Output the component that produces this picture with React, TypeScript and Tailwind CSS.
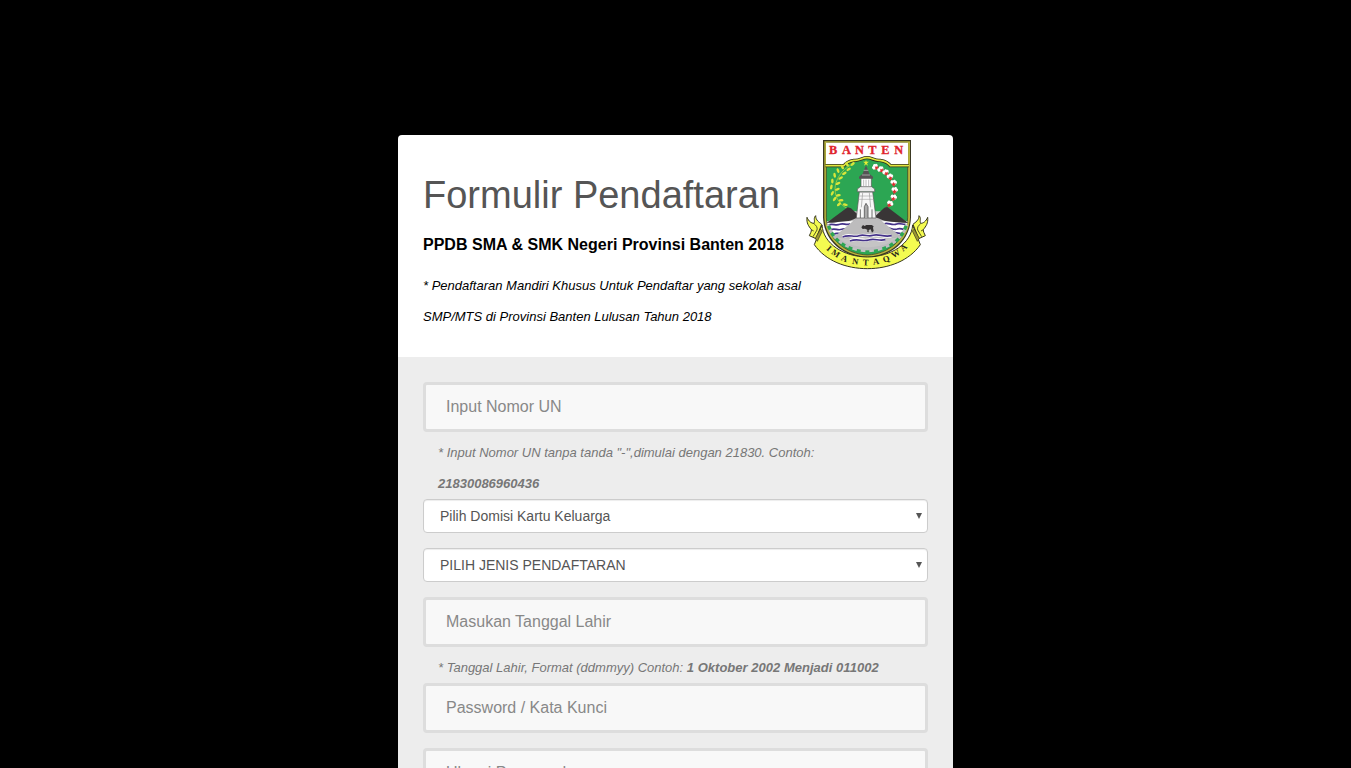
import React from 'react';

const TITLE: [string, number][] = [
  ['B', 99], ['A', 139], ['N', 178], ['T', 217], ['E', 256], ['N', 296],
];

const MOTTO: [string, number, number, number][] = [
  ['I', 87, 356, 40],
  ['M', 107, 371, 34],
  ['A', 133, 386, 22],
  ['N', 166, 395, 10],
  ['T', 197, 398, 2],
  ['A', 228, 395, -8],
  ['Q', 259, 387, -20],
  ['W', 287, 372, -32],
  ['A', 311, 353, -44],
];

const LEAVES: [number, number, number][] = [
  [141, 103, 40], [158, 102, -50], [127, 111, 30], [146, 118, -55], [114, 122, 20],
  [133, 130, -60], [104, 136, 10], [122, 144, -62], [97, 153, 0], [114, 160, -65],
  [94, 171, -12], [112, 178, -72], [97, 190, -25], [115, 196, -80], [104, 207, -38],
  [123, 211, -88], [117, 223, -50], [136, 224, -100],
];

const COTTON: [number, number, number][] = [
  [226, 111, -55], [242, 118, -40], [257, 127, -25], [270, 140, -12],
  [281, 158, 0], [284, 180, 5], [281, 202, 12], [270, 221, 25],
];

const COGS: [number, number, number][] = [
  [88, 293, 65], [98, 313, 54], [112, 330, 44], [130, 344, 34], [151, 355, 22],
  [176, 363, 10], [202, 366, 0], [228, 363, -10], [253, 355, -22], [274, 344, -34],
  [292, 330, -44], [306, 313, -54], [316, 293, -65],
];

function RibbonEnd() {
  return (
    <g stroke="#35351d" strokeWidth="3" strokeLinejoin="round">
      <path d="M21 262C26 274 34 280 42 280C46 272 39 265 47 257C47 271 57 276 65 283L48 326L28 317C31 310 35 304 34 299C26 288 19 280 21 262Z" fill="#f4fb50" />
      <path d="M42 281C49 287 53 292 51 300L39 320M34 299L41 303" fill="none" strokeWidth="2.5" />
      <path d="M46 325L61 297L67 303L52 334Z" fill="#9c9733" strokeWidth="2" />
    </g>
  );
}

function Emblem() {
  return (
    <svg
      className="absolute left-[408px] top-1 h-[131px] w-[123px]"
      viewBox="18 27 369 393"
      role="img"
      aria-label="Banten"
    >
      <path d="M69 30H333V262C331 332 274 382 202 384C130 382 71 332 69 262Z" fill="#3a3822" />
      <path d="M73 34H330V262C328 329 272 378 202 380C132 378 75 329 73 262Z" fill="#b9b63c" />
      <path d="M79 39H323V262C321 325 268 372 202 375C136 372 81 325 79 262Z" fill="#2ca653" stroke="#39381f" strokeWidth="2" />
      <path d="M78 38H324V106H271C264 94 253 91 240 89C225 91 216 81 201 81C186 81 177 91 162 89C149 91 139 95 132 106H78Z" fill="#fff" />
      <path d="M76 107H132C139 96 149 93 162 91C177 93 187 83 201 83C215 83 226 93 240 91C253 93 264 96 271 107H327" fill="none" stroke="#30301c" strokeWidth="10" />
      <path d="M76 107H132C139 96 149 93 162 91C177 93 187 83 201 83C215 83 226 93 240 91C253 93 264 96 271 107H327" fill="none" stroke="#e2e83e" strokeWidth="5" />
      {TITLE.map(([ch, x]) => (
        <text key={x} x={x} y="72" textAnchor="middle" fill="#e0242c" stroke="#e0242c" strokeWidth="1" fontFamily="Liberation Serif, serif" fontWeight="bold" fontSize="37">{ch}</text>
      ))}

      <path d="M156 103C124 119 105 150 105 178C106 204 119 223 141 235" fill="none" stroke="#c9dc3a" strokeWidth="2" />
      {LEAVES.map(([x, y, r], i) => (
        <ellipse key={i} cx={x} cy={y} rx="3.8" ry="7.5" fill="#d9e63a" transform={`rotate(${-r} ${x} ${y})`} />
      ))}
      <path d="M220 108C258 112 283 143 283 180C281 204 272 219 256 233" fill="none" stroke="#7b4540" strokeWidth="2" />
      {COTTON.map(([x, y, r], i) => (
        <g key={i} transform={`translate(${x} ${y}) rotate(${r}) scale(1.05)`}>
          <path d="M-9 1C-10-8-4-9-2-6C0-10 6-9 6-5C11-5 10 2 7 4L0 9Z" fill="#fff" />
          <path d="M-7 1L-3 3L0-2L3 3L7 1L3 8L0 11L-3 8Z" fill="#dc3130" />
        </g>
      ))}
      <path d="M198 90L200 95H207L201 100L204 107L198 103L192 107L195 100L189 95H196Z" fill="#e7ed32" />

      <path d="M80 276L143 244H263L323 276C316 328 267 364 202 367C137 364 88 328 80 276Z" fill="#c5c4c5" />
      <path d="M82 274H322C317 296 309 311 299 322L230 264H174L105 322C94 308 86 295 82 274Z" fill="#fff" />
      <path d="M86 285C96 279 107 288 119 283C130 278 140 287 150 281M93 299C104 293 113 303 125 298C132 294 138 298 143 296M103 312C110 307 117 313 125 309M254 281C263 276 277 288 290 282C301 278 309 285 317 283M260 296C269 290 280 302 292 297C301 293 307 299 311 297M278 309C286 304 293 313 302 309" fill="none" stroke="#443189" strokeWidth="5" />
      <path d="M174 262H230L300 318C283 325 263 325 244 321C217 313 183 313 161 321C142 327 122 324 106 318Z" fill="#bdbcbd" stroke="#a5a5a6" />
      <path d="M79 279L143 232L153 235L182 262C164 264 158 272 145 273C123 275 106 278 79 279ZM222 262L253 233L262 231L325 279C302 278 279 276 258 273C245 272 238 264 222 262Z" fill="#393536" />
      <path d="M128 321C148 310 157 323 177 318C190 311 204 320 218 316C235 310 248 323 274 318M150 332C177 322 189 335 207 329C222 323 236 334 255 329" fill="none" stroke="#fff" strokeWidth="9" />
      <path d="M128 321C148 312 161 323 177 317C194 311 204 322 219 316C236 310 250 323 275 317M150 333C173 324 189 336 206 330C224 324 236 334 256 329" fill="none" stroke="#443189" strokeWidth="5" />
      <path d="M84 284C96 330 143 355 202 357C261 355 309 330 320 284" fill="none" stroke="#bdbcbf" strokeWidth="9" />
      {COGS.map(([x, y, r], i) => (
        <rect key={i} x={x - 6} y={y - 5} width="12" height="10" fill="#2ca653" transform={`rotate(${r} ${x} ${y})`} />
      ))}

      <path d="M178 186H218L228 264H169Z" fill="#f7f7f7" stroke="#555" strokeWidth="2" />
      <path d="M183 143H214V174H183Z" fill="#fff" stroke="#555" strokeWidth="2" />
      <path d="M190 125L198 106L206 125L208 131L219 140V146H177V140L188 131Z" fill="#565455" />
      <path d="M191 121H205M186 135H210" stroke="#ccc" strokeWidth="2" />
      <path d="M172 177L181 170H215L224 177V185H172Z" fill="#e9e9e9" stroke="#555" strokeWidth="2" />
      <path d="M178 198H218M176 208H220" stroke="#aaa" strokeWidth="2" />
      <path d="M191 149V169M198 149V169M206 149V169M188 188L184 232M208 188L212 232" stroke="#999" strokeWidth="2" />
      <path d="M193 264V230L198 220L204 230V264M181 264V238M216 264V238" fill="#aaa" stroke="#555" strokeWidth="2.5" />
      <path d="M184 292L189 285L194 288L199 285H215L221 289L219 293L221 303L216 308L212 298L206 300V307L202 306V299L195 296L188 297Z" fill="#343132" />

      <path d="M66 285L43 344C76 392 138 416 202 416C266 416 328 392 361 344L338 285C334 341 274 380 202 381C130 380 70 341 66 285Z" fill="#f4fb50" stroke="#35351d" strokeWidth="3" strokeLinejoin="round" />
      <RibbonEnd />
      <g transform="translate(404 0) scale(-1 1)">
        <RibbonEnd />
      </g>
      {MOTTO.map(([ch, x, y, r], i) => (
        <text key={i} x={x} y={y + 8} textAnchor="middle" fill="#292718" fontFamily="Liberation Serif, serif" fontWeight="bold" fontSize="26" transform={`rotate(${r} ${x} ${y})`}>{ch}</text>
      ))}
    </svg>
  );
}

function TextInput({ label, type = 'text' }: { label: string; type?: string }) {
  return (
    <input
      type={type}
      placeholder={label}
      className="block h-[50px] w-full rounded border-[3px] border-[#ddd] bg-[#f8f8f8] px-5 text-base text-[#888] outline-none placeholder:text-[#888]"
    />
  );
}

function Dropdown({ label }: { label: string }) {
  return (
    <button className="flex h-[34px] w-full items-center justify-between rounded border border-[#ccc] bg-white pl-4 pr-[5px] text-sm text-[#555] shadow-[inset_0_1px_1px_rgba(0,0,0,0.075)]">
      <span>{label}</span>
      <svg className="mb-px h-[6px] w-[6px]" viewBox="0 0 6 6" aria-hidden="true">
        <path d="M0 0H6L3 6Z" fill="#555" />
      </svg>
    </button>
  );
}

export default function App() {
  return (
    <div className="h-screen overflow-hidden bg-black pt-[135px] font-['Liberation_Sans',Arial,sans-serif]">
      <main className="mx-auto w-[555px]">
        <header className="relative h-[222px] rounded-t bg-white px-[25px] pt-[37px]">
          <Emblem />
          <h1 className="text-[38px] leading-[46px] text-[#555]">Formulir Pendaftaran</h1>
          <p className="mt-[11px] text-base font-bold leading-8 tracking-[0.015px] text-black">PPDB SMA &amp; SMK Negeri Provinsi Banten 2018</p>
          <p className="mt-[9px] w-[390px] text-[13px] italic leading-[31px] text-black">
            * Pendaftaran Mandiri Khusus Untuk Pendaftar yang sekolah asal SMP/MTS di Provinsi Banten Lulusan Tahun 2018
          </p>
        </header>
        <form className="h-[600px] bg-[#ededed] px-[25px] pt-[25px]">
          <TextInput label="Input Nomor UN" />
          <p className="mt-[5px] px-[15px] text-[13px] italic leading-[31px] text-[#777]">
            * Input Nomor UN tanpa tanda "-",dimulai dengan 21830. Contoh:
            <br />
            <b>21830086960436</b>
          </p>
          <div className="flex flex-col gap-[15px]">
            <Dropdown label="Pilih Domisi Kartu Keluarga" />
            <Dropdown label="PILIH JENIS PENDAFTARAN" />
            <TextInput label="Masukan Tanggal Lahir" />
          </div>
          <p className="mt-[5px] px-[15px] text-[13px] italic leading-[31px] text-[#777]">
            * Tanggal Lahir, Format (ddmmyy) Contoh: <b className="tracking-[0.02px]">1 Oktober 2002 Menjadi 011002</b>
          </p>
          <div className="flex flex-col gap-[15px]">
            <TextInput label="Password / Kata Kunci" type="password" />
            <TextInput label="Ulangi Password" type="password" />
          </div>
        </form>
      </main>
    </div>
  );
}
